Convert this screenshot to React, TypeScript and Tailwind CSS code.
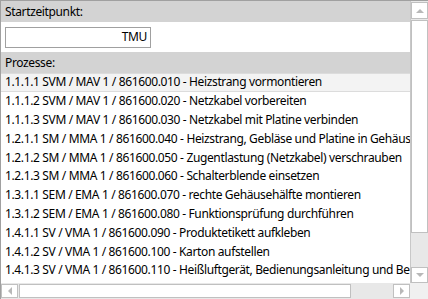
import React from "react";

const rows = [
  "1.1.1.1 SVM / MAV 1 / 861600.010 - Heizstrang vormontieren",
  "1.1.1.2 SVM / MAV 1 / 861600.020 - Netzkabel vorbereiten",
  "1.1.1.3 SVM / MAV 1 / 861600.030 - Netzkabel mit Platine verbinden",
  "1.2.1.1 SM / MMA 1 / 861600.040 - Heizstrang, Gebläse und Platine in Gehäuse einsetzen",
  "1.2.1.2 SM / MMA 1 / 861600.050 - Zugentlastung (Netzkabel) verschrauben",
  "1.2.1.3 SM / MMA 1 / 861600.060 - Schalterblende einsetzen",
  "1.3.1.1 SEM / EMA 1 / 861600.070 - rechte Gehäusehälfte montieren",
  "1.3.1.2 SEM / EMA 1 / 861600.080 - Funktionsprüfung durchführen",
  "1.4.1.1 SV / VMA 1 / 861600.090 - Produktetikett aufkleben",
  "1.4.1.2 SV / VMA 1 / 861600.100 - Karton aufstellen",
  "1.4.1.3 SV / VMA 1 / 861600.110 - Heißluftgerät, Bedienungsanleitung und Beipackzettel einlegen",
];

const Arrow = ({ dir }: { dir: "up" | "down" | "left" | "right" }) => {
  const pts: Record<string, string> = {
    up: "0,4 4,0 8,4",
    down: "0,0 8,0 4,4",
    left: "4,0 4,8 0,4",
    right: "0,0 0,8 4,4",
  };
  const vert = dir === "up" || dir === "down";
  return (
    <svg width={vert ? 8 : 4} height={vert ? 4 : 8} viewBox={vert ? "0 0 8 4" : "0 0 4 8"}>
      <polygon points={pts[dir]} fill="#b8b8b8" />
    </svg>
  );
};

export default function App() {
  return (
    <div
      className="w-[428px] h-[299px] flex flex-col bg-white border-l border-t border-[#a0a0a0] overflow-hidden text-[12px] tracking-[-0.36px] text-black"
      style={{ fontFamily: '"Noto Sans", "Open Sans", sans-serif' }}
    >
      <div className="flex h-[282px]">
        <div className="w-[409px] flex flex-col overflow-hidden">
          <div className="h-[21px] bg-[#d3d3d3] flex items-center pl-[4px] leading-none">Startzeitpunkt:</div>
          <div className="h-[30px] flex items-center pl-[4px]">
            <div className="w-[146px] h-[21px] border border-[#a0a0a0] flex items-center justify-end pr-[3px] leading-none">
              TMU
            </div>
          </div>
          <div className="h-[21px] bg-[#d3d3d3] flex items-center pl-[4px] leading-none">Prozesse:</div>
          <div className="flex flex-col">
            {rows.map((r, i) => (
              <div
                key={i}
                className={`h-[18.8px] flex items-center pl-[4px] whitespace-nowrap leading-none ${
                  i === 0 ? "bg-[#f3f3f3] border-y border-[#dcdcdc]" : ""
                }`}
              >
                {r}
              </div>
            ))}
          </div>
        </div>
        <div className="w-[18px] border-l border-[#c8c8c8] bg-[#e8e8e8] flex flex-col">
          <div className="h-[17px] mt-[1px] bg-white border border-[#c0c0c0] flex items-center justify-center">
            <Arrow dir="up" />
          </div>
          <div className="h-[213px] mt-[1px] bg-white border border-[#c0c0c0]" />
          <div className="flex-1" />
          <div className="h-[16px] bg-white border border-[#c0c0c0] flex items-center justify-center">
            <Arrow dir="down" />
          </div>
        </div>
      </div>
      <div className="flex flex-1 bg-[#e8e8e8]">
        <div className="w-[409px] flex items-stretch py-[1px]">
          <div className="w-[17px] bg-white border border-[#c0c0c0] flex items-center justify-center">
            <Arrow dir="left" />
          </div>
          <div className="w-[332px] ml-[1px] bg-white border border-[#c0c0c0]" />
          <div className="flex-1" />
          <div className="w-[17px] bg-white border border-[#c0c0c0] flex items-center justify-center">
            <Arrow dir="right" />
          </div>
        </div>
        <div className="flex-1 bg-[#f0f0f0]" />
      </div>
    </div>
  );
}
